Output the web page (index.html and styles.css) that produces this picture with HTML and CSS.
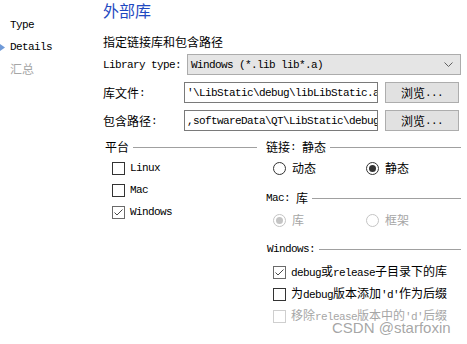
FILE: index.html
```html
<!DOCTYPE html>
<html>
<head>
<meta charset="utf-8">
<link rel="stylesheet" href="styles.css">
</head>
<body>
<div class="page">
  <nav class="side">
    <div class="step m">Type</div>
    <div class="step m">
      <svg class="arrow" width="5" height="7" viewBox="0 0 5 7"><polygon points="0,0 5,3.5 0,7" fill="#6f9ad8"/></svg>Details
    </div>
    <div class="step dis">汇总</div>
  </nav>
  <main class="main">
    <h1 class="title">外部库</h1>
    <p class="sub">指定链接库和包含路径</p>
    <div class="form">
      <span class="lbl m">Library type:</span>
      <div class="combo">
        <span class="m">Windows (*.lib lib*.a)</span>
        <svg width="9" height="6" viewBox="0 0 9 6"><polyline points="0.5,0.5 4.5,4.5 8.5,0.5" fill="none" stroke="#606060" stroke-width="1"/></svg>
      </div>
      <span class="lbl">库文件<span class="m">:</span></span>
      <div class="field m">'\LibStatic\debug\libLibStatic.a</div>
      <div class="btn">浏览<span class="m">...</span></div>
      <span class="lbl">包含路径<span class="m">:</span></span>
      <div class="field m">,softwareData\QT\LibStatic\debug</div>
      <div class="btn">浏览<span class="m">...</span></div>
    </div>
    <div class="groups">
      <section class="col">
        <div class="gh">平台</div>
        <div class="checks plat">
          <label class="ck"><svg class="box" width="13" height="13" viewBox="0 0 13 13"><rect x="0.5" y="0.5" width="12" height="12" fill="#fff" stroke="#333"/></svg><span class="m">Linux</span></label>
          <label class="ck"><svg class="box" width="13" height="13" viewBox="0 0 13 13"><rect x="0.5" y="0.5" width="12" height="12" fill="#fff" stroke="#333"/></svg><span class="m">Mac</span></label>
          <label class="ck"><svg class="box" width="13" height="13" viewBox="0 0 13 13"><rect x="0.5" y="0.5" width="12" height="12" fill="#fff" stroke="#6a6a6a"/><polyline points="2.5,6.5 5,9 10.5,3.5" fill="none" stroke="#4a4a4a" stroke-width="1"/></svg><span class="m">Windows</span></label>
        </div>
      </section>
      <section class="col">
        <div class="gh">链接<span class="m">: </span>静态</div>
        <div class="radios r1">
          <label class="rd"><svg width="13" height="13" viewBox="0 0 13 13"><circle cx="6.5" cy="6.5" r="6" fill="#fff" stroke="#333"/></svg>动态</label>
          <label class="rd"><svg width="13" height="13" viewBox="0 0 13 13"><circle cx="6.5" cy="6.5" r="6" fill="#fff" stroke="#333"/><circle cx="6.5" cy="6.5" r="3.5" fill="#333"/></svg>静态</label>
        </div>
        <div class="gh mac"><span class="m">Mac: </span>库</div>
        <div class="radios r2 dis">
          <label class="rd"><svg width="13" height="13" viewBox="0 0 13 13"><circle cx="6.5" cy="6.5" r="6" fill="#fff" stroke="#c4c4c4"/><circle cx="6.5" cy="6.5" r="3.5" fill="#c4c4c4"/></svg>库</label>
          <label class="rd"><svg width="13" height="13" viewBox="0 0 13 13"><circle cx="6.5" cy="6.5" r="6" fill="#fff" stroke="#c4c4c4"/></svg>框架</label>
        </div>
        <div class="gh win m">Windows:</div>
        <div class="checks wchecks">
          <label class="ck"><svg class="box" width="13" height="13" viewBox="0 0 13 13"><rect x="0.5" y="0.5" width="12" height="12" fill="#fff" stroke="#6a6a6a"/><polyline points="2.5,6.5 5,9 10.5,3.5" fill="none" stroke="#4a4a4a" stroke-width="1"/></svg><span><span class="m">debug</span>或<span class="m">release</span>子目录下的库</span></label>
          <label class="ck"><svg class="box" width="13" height="13" viewBox="0 0 13 13"><rect x="0.5" y="0.5" width="12" height="12" fill="#fff" stroke="#333"/></svg><span>为<span class="m">debug</span>版本添加<span class="m">'d'</span>作为后缀</span></label>
          <label class="ck dis"><svg class="box" width="13" height="13" viewBox="0 0 13 13"><rect x="0.5" y="0.5" width="12" height="12" fill="#fff" stroke="#cfcfcf"/></svg><span>移除<span class="m">release</span>版本中的<span class="m">'d'</span>后缀</span></label>
        </div>
      </section>
    </div>
  </main>
  <div class="wm">CSDN @starfoxin</div>
</div>
</body>
</html>
```
FILE: styles.css
```css
html, body {
  margin: 0;
  padding: 0;
  background: #fff;
}
body {
  width: 467px;
  height: 344px;
  overflow: hidden;
  font-family: "Noto Sans CJK SC", sans-serif;
  font-size: 12px;
  line-height: 16px;
  color: #000;
}
.m {
  font-family: "Liberation Mono", monospace;
  font-size: 11px;
  letter-spacing: -0.6px;
}
.dis {
  color: #a6a6a6;
}
.page {
  display: flex;
  height: 344px;
  position: relative;
}
.side {
  width: 103px;
  flex: none;
  padding-top: 14px;
}
.step {
  position: relative;
  height: 22px;
  line-height: 22px;
  padding-left: 10px;
}
.arrow {
  position: absolute;
  left: 0;
  top: 8px;
}
.main {
  flex: 1;
  padding-right: 6px;
  min-width: 0;
}
.title {
  margin: -1px 0 0;
  font-size: 16px;
  line-height: 22px;
  font-weight: normal;
  color: #1f49c1;
}
.sub {
  margin: 11px 0 0;
  line-height: 20px;
}
.form {
  display: grid;
  grid-template-columns: 81px 194px 83px;
  grid-auto-rows: 21px;
  row-gap: 7px;
  margin-top: 2px;
}
.lbl {
  display: flex;
  align-items: center;
}
.combo {
  grid-column: 2 / 4;
  margin-left: 3px;
  display: flex;
  align-items: center;
  justify-content: space-between;
  padding: 0 7px 0 3px;
  background: #e5e5e5;
  border: 1px solid #acacac;
}
.field {
  display: flex;
  align-items: center;
  padding-left: 2px;
  border: 1px solid #7a7a7a;
  background: #fff;
  overflow: hidden;
  white-space: nowrap;
}
.btn {
  margin-left: 7px;
  margin-right: 2px;
  display: flex;
  align-items: center;
  justify-content: center;
  background: #e1e1e1;
  border: 1px solid #adadad;
}
.groups {
  display: grid;
  grid-template-columns: 152px 195px;
  column-gap: 9px;
  padding-left: 2px;
  margin-top: 8px;
}
.col {
  display: flex;
  flex-direction: column;
}
.gh {
  display: flex;
  align-items: center;
  height: 16px;
  white-space: pre;
}
.gh::after {
  content: "";
  flex: 1;
  height: 1px;
  margin-left: 4px;
  background: #a0a0a0;
}
.checks {
  display: flex;
  flex-direction: column;
  margin-top: 2px;
}
.ck {
  display: flex;
  align-items: center;
  height: 22px;
  gap: 5px;
}
.plat .ck {
  padding-left: 7px;
}
.wchecks {
  margin-top: 4px;
}
.wchecks .ck {
  padding-left: 7px;
  gap: 5px;
}
.box {
  flex: none;
}
.radios {
  display: grid;
  grid-template-columns: 93px auto;
  padding-left: 7px;
  height: 22px;
}
.r1 {
  margin-top: 2px;
}
.r2 {
  margin-top: 3px;
}
.rd {
  display: flex;
  align-items: center;
  gap: 6px;
}
.mac {
  margin-top: 11px;
}
.win {
  margin-top: 10px;
  padding-left: 1px;
}
.wm {
  position: absolute;
  left: 332px;
  top: 320px;
  font-family: "Liberation Sans", Arial, sans-serif;
  font-size: 15px;
  line-height: 16px;
  color: rgba(150, 150, 150, 0.85);
}
```
